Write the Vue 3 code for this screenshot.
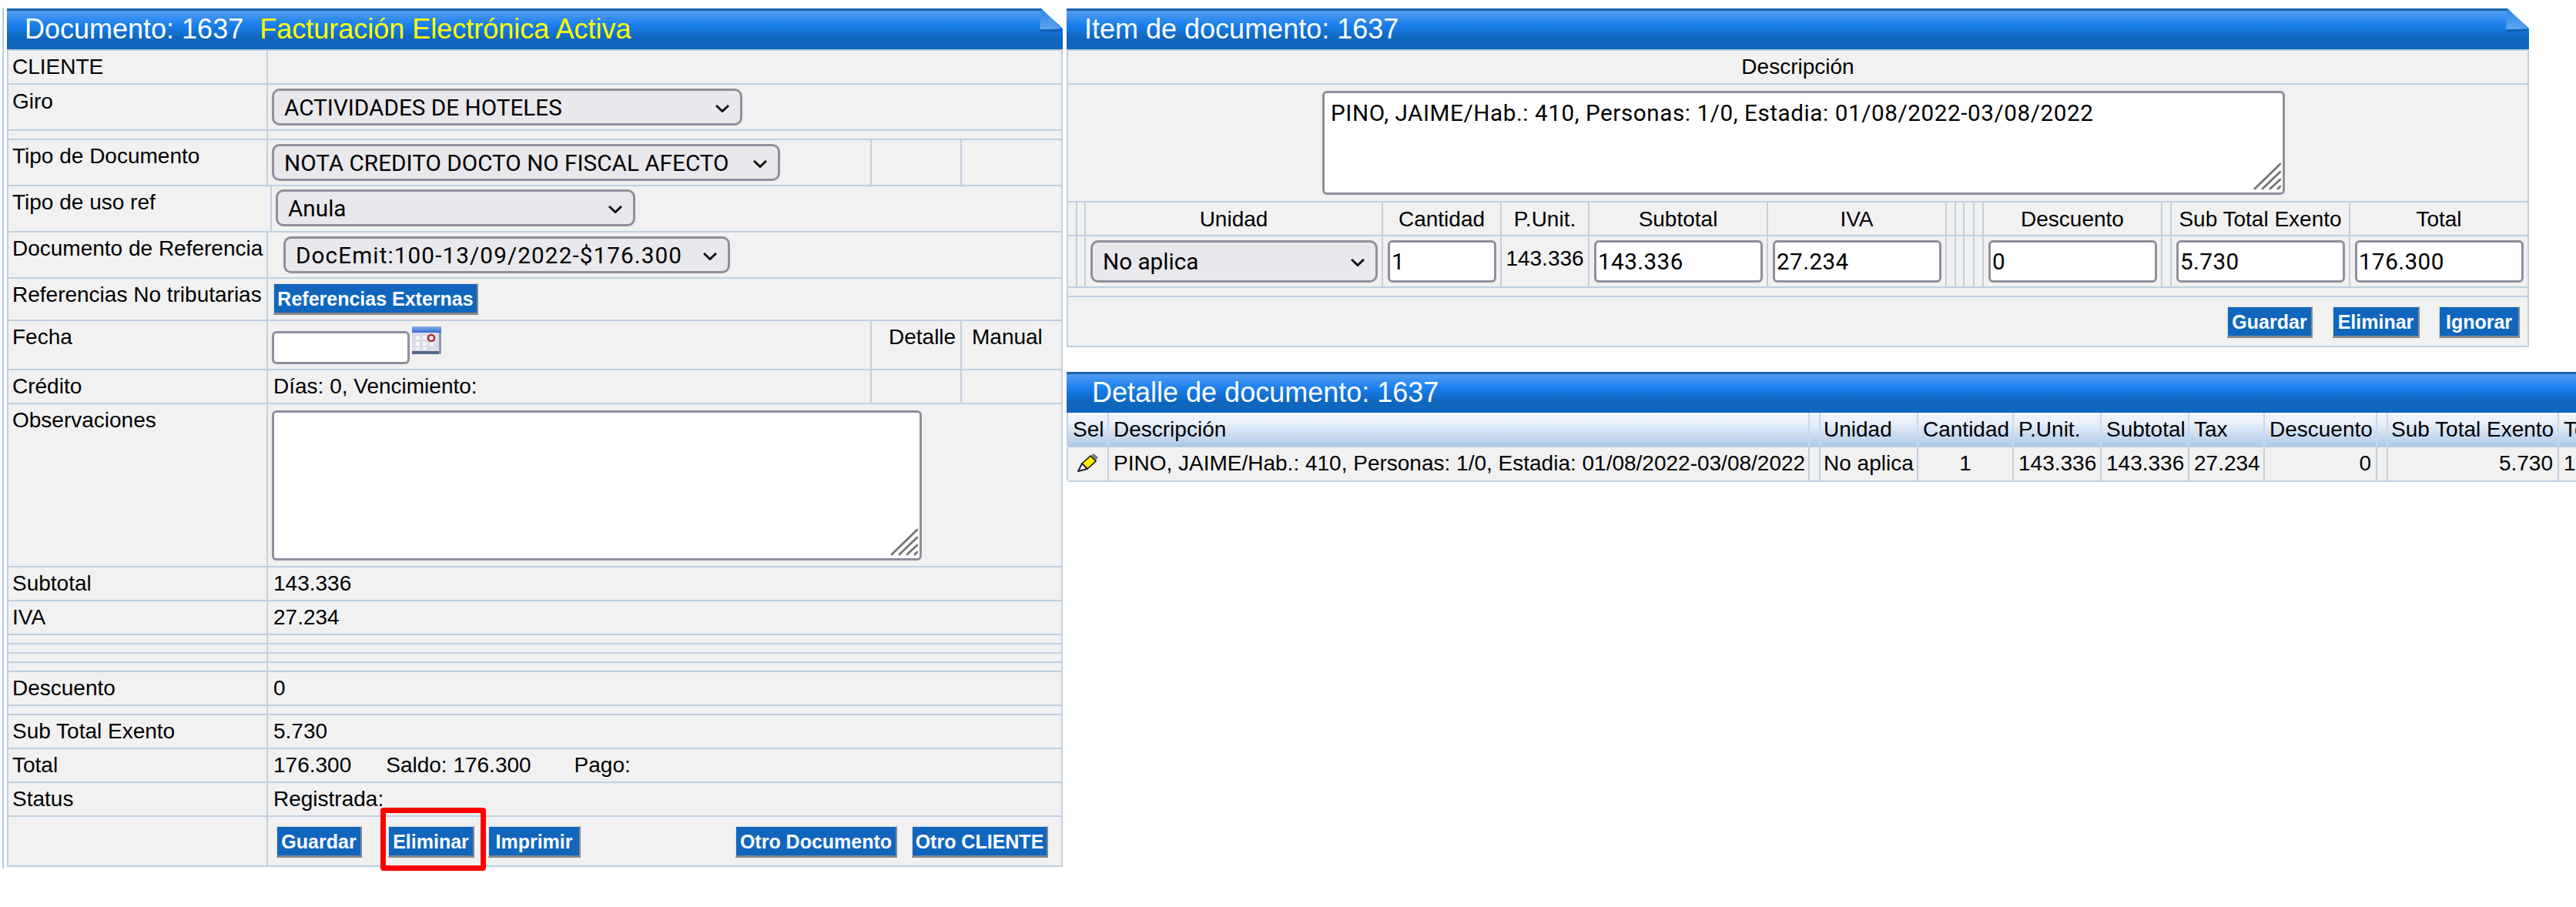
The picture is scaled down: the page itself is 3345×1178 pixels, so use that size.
<script setup>
const itemHeadCols = ['', '', 'Unidad', 'Cantidad', 'P.Unit.', 'Subtotal', 'IVA', '', '', '', '', 'Descuento', '', 'Sub Total Exento', 'Total']
const detailHead = ['Sel', 'Descripción', '', 'Unidad', 'Cantidad', 'P.Unit.', 'Subtotal', 'Tax', 'Descuento', '', 'Sub Total Exento', 'Total']
const blanksA = [1, 2, 3, 4]
</script>

<template>
  <div class="page">
    <div class="left-col">
      <section class="panel doc">
        <header class="head">
          <span class="title">Documento: 1637</span>
          <span class="title active">Facturación Electrónica Activa</span>
          <svg class="fold" width="30" height="34" viewBox="0 0 30 34">
            <polygon points="2,0 30,0 30,26" fill="#fff" />
            <polygon points="2,0 28,26 0,28" fill="url(#foldA)" />
            <rect x="0" y="27" width="28" height="3" fill="#0d57a3" opacity=".7" />
            <defs>
              <linearGradient id="foldA" x1="0" y1="0" x2="0" y2="1">
                <stop offset="0" stop-color="#2d86e8" />
                <stop offset="1" stop-color="#5fa4ee" />
              </linearGradient>
            </defs>
          </svg>
        </header>
        <div class="body">
          <div class="row r44"><div class="lab">CLIENTE</div><div class="val"></div></div>
          <div class="row r60">
            <div class="lab lab-giro">Giro</div>
            <div class="val">
              <div class="sel w-giro"><select><option>ACTIVIDADES DE HOTELES</option></select><svg class="chev" width="18" height="10" viewBox="0 0 18 10"><polyline points="1,1 9,8.5 17,1" /></svg></div>
            </div>
          </div>
          <div class="row r12"><div class="lab"></div><div class="val"></div></div>
          <div class="row r60">
            <div class="lab">Tipo de Documento</div>
            <div class="val">
              <div class="sel w-tipo"><select><option>NOTA CREDITO DOCTO NO FISCAL AFECTO</option></select><svg class="chev" width="18" height="10" viewBox="0 0 18 10"><polyline points="1,1 9,8.5 17,1" /></svg></div>
            </div>
            <div class="c-det"></div><div class="c-man"></div>
          </div>
          <div class="row r60">
            <div class="lab lab-wide">Tipo de uso ref</div>
            <div class="val">
              <div class="sel w-uso"><select><option>Anula</option></select><svg class="chev" width="18" height="10" viewBox="0 0 18 10"><polyline points="1,1 9,8.5 17,1" /></svg></div>
            </div>
          </div>
          <div class="row r60">
            <div class="lab">Documento de Referencia</div>
            <div class="val">
              <div class="sel w-ref"><select><option>DocEmit:100-13/09/2022-$176.300</option></select><svg class="chev" width="18" height="10" viewBox="0 0 18 10"><polyline points="1,1 9,8.5 17,1" /></svg></div>
            </div>
          </div>
          <div class="row r55">
            <div class="lab">Referencias No tributarias</div>
            <div class="val"><button class="btn b-ext">Referencias Externas</button></div>
          </div>
          <div class="row r63">
            <div class="lab">Fecha</div>
            <div class="val fecha">
              <input class="inp in-fecha" type="text" />
              <svg class="cal" width="38" height="36" viewBox="0 0 38 36">
                <defs>
                  <linearGradient id="calTop" x1="0" y1="0" x2="0" y2="1">
                    <stop offset="0" stop-color="#8fb2ec" />
                    <stop offset="1" stop-color="#3468d8" />
                  </linearGradient>
                </defs>
                <rect x="0" y="0" width="38" height="36" rx="1" fill="#d9dce6" />
                <rect x="0" y="0" width="38" height="8" fill="url(#calTop)" />
                <g fill="#f6f7fb">
                  <rect x="5" y="12" width="5" height="5" /><rect x="14" y="12" width="5" height="5" />
                  <rect x="5" y="20" width="5" height="5" /><rect x="14" y="20" width="5" height="5" /><rect x="23" y="20" width="5" height="5" />
                  <rect x="5" y="27" width="5" height="3" /><rect x="14" y="27" width="5" height="3" />
                </g>
                <circle cx="25" cy="15" r="4" fill="#fff" stroke="#ac2f33" stroke-width="2.6" />
                <rect x="0" y="32" width="38" height="4" fill="#53688a" />
                <rect x="35" y="8" width="3" height="28" fill="#8e9ab0" />
              </svg>
            </div>
            <div class="c-det">Detalle</div><div class="c-man">Manual</div>
          </div>
          <div class="row r44">
            <div class="lab">Crédito</div>
            <div class="val txt">Días: 0, Vencimiento:</div>
            <div class="c-det"></div><div class="c-man"></div>
          </div>
          <div class="row r212">
            <div class="lab">Observaciones</div>
            <div class="val">
              <div class="ta ta-obs">
                <textarea></textarea>
                <svg class="grip" width="36" height="36" viewBox="0 0 36 36"><g><line x1="2" y1="34" x2="35" y2="2" /><line x1="12" y1="34" x2="35" y2="12" /><line x1="22" y1="34" x2="35" y2="22" /><line x1="32" y1="34" x2="35" y2="31" /></g></svg>
              </div>
            </div>
          </div>
          <div class="row r44"><div class="lab">Subtotal</div><div class="val txt">143.336</div></div>
          <div class="row r44"><div class="lab">IVA</div><div class="val txt">27.234</div></div>
          <div v-for="b in blanksA" :key="b" class="row r12"><div class="lab"></div><div class="val"></div></div>
          <div class="row r44"><div class="lab">Descuento</div><div class="val txt">0</div></div>
          <div class="row r12"><div class="lab"></div><div class="val"></div></div>
          <div class="row r44"><div class="lab">Sub Total Exento</div><div class="val txt">5.730</div></div>
          <div class="row r44">
            <div class="lab">Total</div>
            <div class="val txt"><span class="t-total">176.300</span><span class="t-saldo">Saldo: 176.300</span><span>Pago:</span></div>
          </div>
          <div class="row r44"><div class="lab">Status</div><div class="val txt">Registrada:</div></div>
          <div class="row r65">
            <div class="lab"></div>
            <div class="val actions">
              <button class="btn b-g">Guardar</button>
              <button class="btn b-e">Eliminar</button>
              <button class="btn b-i">Imprimir</button>
              <button class="btn b-od">Otro Documento</button>
              <button class="btn b-oc">Otro CLIENTE</button>
            </div>
          </div>
        </div>
        <div class="redbox"></div>
      </section>
    </div>

    <div class="right-col">
      <section class="panel item">
        <header class="head">
          <span class="title">Item de documento: 1637</span>
          <svg class="fold" width="30" height="34" viewBox="0 0 30 34">
            <polygon points="2,0 30,0 30,26" fill="#fff" />
            <polygon points="2,0 28,26 0,28" fill="url(#foldB)" />
            <rect x="0" y="27" width="28" height="3" fill="#0d57a3" opacity=".7" />
            <defs>
              <linearGradient id="foldB" x1="0" y1="0" x2="0" y2="1">
                <stop offset="0" stop-color="#2d86e8" />
                <stop offset="1" stop-color="#5fa4ee" />
              </linearGradient>
            </defs>
          </svg>
        </header>
        <div class="body">
          <div class="row r44 center">Descripción</div>
          <div class="row r153 desc-row">
            <div class="ta ta-desc">
              <textarea>PINO, JAIME/Hab.: 410, Personas: 1/0, Estadia: 01/08/2022-03/08/2022</textarea>
              <svg class="grip" width="36" height="36" viewBox="0 0 36 36"><g><line x1="2" y1="34" x2="35" y2="2" /><line x1="12" y1="34" x2="35" y2="12" /><line x1="22" y1="34" x2="35" y2="22" /><line x1="32" y1="34" x2="35" y2="31" /></g></svg>
            </div>
          </div>
          <div class="grid-item r44 gridrow">
            <div v-for="(c, i) in itemHeadCols" :key="i" class="gc head-c">{{ c }}</div>
          </div>
          <div class="grid-item r67 gridrow">
            <div class="gc"></div><div class="gc"></div>
            <div class="gc pad"><div class="sel w-full"><select><option>No aplica</option></select><svg class="chev" width="18" height="10" viewBox="0 0 18 10"><polyline points="1,1 9,8.5 17,1" /></svg></div></div>
            <div class="gc pad"><input class="inp in-cell" value="1" /></div>
            <div class="gc punit">143.336</div>
            <div class="gc pad"><input class="inp in-cell" value="143.336" /></div>
            <div class="gc pad"><input class="inp in-cell" value="27.234" /></div>
            <div class="gc"></div><div class="gc"></div><div class="gc"></div><div class="gc"></div>
            <div class="gc pad"><input class="inp in-cell" value="0" /></div>
            <div class="gc"></div>
            <div class="gc pad"><input class="inp in-cell" value="5.730" /></div>
            <div class="gc pad"><input class="inp in-cell" value="176.300" /></div>
          </div>
          <div class="row r12"></div>
          <div class="row r65 item-actions">
            <button class="btn i-g">Guardar</button>
            <button class="btn i-e">Eliminar</button>
            <button class="btn i-i">Ignorar</button>
          </div>
        </div>
      </section>

      <section class="panel detail">
        <header class="head"><span class="title t-detail">Detalle de documento: 1637</span></header>
        <div class="grid-detail d-head">
          <div v-for="(c, i) in detailHead" :key="i" class="dc">{{ c }}</div>
        </div>
        <div class="grid-detail d-row">
          <div class="dc icon-c">
            <svg width="28" height="25" viewBox="0 0 28 25">
              <polygon points="18,2 21,0 27,5 24,9" fill="#7c7c7c" />
              <polygon points="6,13 17,3 24,10 13,20" fill="#fbf000" stroke="#111" stroke-width="1.6" />
              <polygon points="6,13 1,23 13,20" fill="#fff" stroke="#222" stroke-width="2" stroke-linejoin="round" />
            </svg>
          </div>
          <div class="dc">PINO, JAIME/Hab.: 410, Personas: 1/0, Estadia: 01/08/2022-03/08/2022</div>
          <div class="dc"></div>
          <div class="dc">No aplica</div>
          <div class="dc mid">1</div>
          <div class="dc">143.336</div>
          <div class="dc">143.336</div>
          <div class="dc">27.234</div>
          <div class="dc end">0</div>
          <div class="dc"></div>
          <div class="dc end">5.730</div>
          <div class="dc">176.300</div>
        </div>
      </section>
    </div>
  </div>
</template>

<style>
html, body { margin: 0; background: #fff; overflow: hidden; }
</style>

<style scoped>
.page {
  width: 3345px;
  height: 1178px;
  overflow: hidden;
  display: flex;
  align-items: flex-start;
  box-sizing: border-box;
  padding-left: 3px;
  font-family: "Liberation Sans", Arial, sans-serif;
  font-size: 28px;
  color: #000;
}
.left-col {
  flex: none;
  width: 1377px;
  height: 1118px;
  margin-top: 10px;
  padding: 1px 0 0 4px;
  box-sizing: border-box;
  border-left: 2px solid #b4cbea;
}
.right-col {
  flex: none;
  width: 1960px;
  margin: 11px 0 0 5px;
  overflow: hidden;
}
.panel { position: relative; }
.item { width: 1899px; }
.detail { margin-top: 32px; width: 1960px; overflow: hidden; }
.head {
  position: relative;
  height: 53px;
  box-sizing: border-box;
  display: flex;
  align-items: center;
  padding: 0 0 0 23px;
  white-space: nowrap;
  background: linear-gradient(#1b60aa 0, #1b60aa 2px, #4f9cf2 4px, #1a7fee 40%, #0f66bd 73%, #0f66bd 100%);
}
.title { color: #fff; font-size: 36px; line-height: 40px; }
.active { color: #ffff00; margin-left: 21px; }
.t-detail { margin-left: 10px; }
.fold { position: absolute; right: 0; top: 0; }
.body {
  border: 2px solid #c0cfe0;
  border-bottom: 0;
  background: #f1f1f1;
}
.row {
  display: flex;
  box-sizing: border-box;
  border-bottom: 2px solid #c0cfe0;
  line-height: 32px;
}
.r12 { height: 12px; }
.r44 { height: 44px; }
.r55 { height: 55px; }
.r60 { height: 60px; }
.r63 { height: 64px; }
.r65 { height: 65px; }
.r67 { height: 67px; }
.r153 { height: 153px; }
.r212 { height: 212px; }
.lab {
  flex: none;
  width: 337px;
  box-sizing: border-box;
  padding: 5px 0 0 5px;
  border-right: 2px solid #c0cfe0;
  white-space: nowrap;
  overflow: visible;
}
.lab-giro { padding-top: 6px; }
.lab-wide { width: 342px; }
.val {
  flex: 1;
  min-width: 0;
  box-sizing: border-box;
  padding-left: 5px;
}
.val.txt { padding: 5px 0 0 7px; white-space: nowrap; }
.t-total { margin-right: 45px; }
.t-saldo { margin-right: 56px; }
.c-det, .c-man {
  flex: none;
  box-sizing: border-box;
  border-left: 2px solid #c0cfe0;
  padding-top: 5px;
  white-space: nowrap;
}
.c-det { width: 117px; padding-left: 22px; }
.c-man { width: 131px; padding-left: 13px; }
.fecha { position: relative; display: flex; align-items: flex-start; }
.cal { flex: none; margin: 7px 0 0 3px; }

.sel { position: relative; display: block; height: 48px; margin-top: 5px; }
.sel select {
  appearance: none;
  -webkit-appearance: none;
  width: 100%;
  height: 100%;
  box-sizing: border-box;
  margin: 0;
  border: 3px solid #8f8f9d;
  border-radius: 10px;
  background: #e9e8ec;
  padding: 0 30px 0 13px;
  font-family: Roboto, "Liberation Sans", sans-serif;
  font-size: 29.7px;
  color: #000;
}
.chev { position: absolute; right: 17px; top: 21px; pointer-events: none; }
.chev polyline { fill: none; stroke: #111; stroke-width: 3; }
.w-giro { width: 611px; }
.w-tipo { width: 660px; }
.w-uso { width: 467px; margin-top: 4px; }
.w-ref { width: 580px; margin-left: 15px; }
.w-ref select { letter-spacing: 1.1px; }
.w-full { height: 55px; margin-top: 0; }
.w-full select { padding-left: 13px; }
.w-full .chev { top: 24px; }

.inp {
  box-sizing: border-box;
  margin: 0;
  border: 3px solid #8f8f9d;
  border-radius: 6px;
  background: #fff;
  padding: 0 2px;
  font-family: Roboto, "Liberation Sans", sans-serif;
  font-size: 29.7px;
  letter-spacing: 0.4px;
  color: #000;
  outline: none;
}
.in-fecha { flex: none; width: 179px; height: 43px; margin-top: 13px; }
.in-cell { display: block; width: 100%; height: 55px; }

.ta { position: relative; }
.ta textarea {
  display: block;
  width: 100%;
  height: 100%;
  box-sizing: border-box;
  margin: 0;
  border: 3px solid #8f8f9d;
  border-radius: 6px;
  background: #fff;
  padding: 8px 8px;
  resize: none;
  outline: none;
  font-family: Roboto, "Liberation Sans", sans-serif;
  font-size: 29.7px;
  letter-spacing: 0.55px;
  line-height: 36px;
  color: #000;
}
.ta-obs { width: 844px; height: 195px; margin-top: 8px; }
.ta-desc { width: 1250px; height: 135px; margin: 8px 0 0 330px; }
.grip { position: absolute; right: 5px; bottom: 6px; pointer-events: none; }
.grip line { stroke: #777; stroke-width: 3; stroke-linecap: round; }

.center { justify-content: center; align-items: center; }

.gridrow { box-sizing: border-box; border-bottom: 2px solid #c0cfe0; }
.grid-item {
  display: grid;
  grid-template-columns: 12px 11px 386px 154px 114px 232px 232px 12px 11px 13px 12px 232px 12px 232px 230px;
}
.gc {
  box-sizing: border-box;
  border-right: 2px solid #c0cfe0;
  min-width: 0;
}
.gc:last-child { border-right: 0; }
.head-c { text-align: center; line-height: 32px; padding-top: 6px; white-space: nowrap; }
.pad { padding: 5px 5px 0 6px; }
.punit { text-align: center; padding-top: 13px; line-height: 32px; white-space: nowrap; }

.btn {
  box-sizing: border-box;
  height: 41px;
  margin: 0;
  padding: 0;
  flex: none;
  border: 0;
  border-top: 1px solid #dcdcdc;
  border-left: 1px solid #dcdcdc;
  border-right: 2px solid #888;
  border-bottom: 3px solid #888;
  background: #1066bd;
  color: #fff;
  font-family: "Liberation Sans", Arial, sans-serif;
  font-weight: 700;
  font-size: 25px;
  line-height: 34px;
  white-space: nowrap;
}
.b-ext { display: block; width: 266px; margin-top: 6px; margin-left: 2px; }
.actions { display: flex; align-items: flex-start; padding: 12px 0 0 11px; }
.b-g { width: 111px; }
.b-e { width: 112px; margin-left: 34px; }
.b-i { width: 120px; margin-left: 18px; }
.b-od { width: 210px; margin-left: 201px; }
.b-oc { width: 177px; margin-left: 19px; }
.item-actions { padding-top: 12px; align-items: flex-start; }
.i-g { width: 111px; margin-left: 1505px; }
.i-e { width: 113px; margin-left: 26px; }
.i-i { width: 105px; margin-left: 25px; }

.redbox {
  position: absolute;
  left: 485px;
  top: 1038px;
  width: 137px;
  height: 82px;
  box-sizing: border-box;
  border: 7px solid #ff0000;
  border-radius: 4px;
  pointer-events: none;
}

.grid-detail {
  display: grid;
  grid-template-columns: 53px 910px 12px 129px 124px 114px 114px 98px 146px 12px 224px 150px;
  margin-left: 2px;
}
.d-head {
  height: 45px;
  box-sizing: border-box;
  background: linear-gradient(#f3f7fc 0, #e9f0fa 30%, #adc8e7 100%);
  border-bottom: 1px solid #c0cfe0;
}
.d-row {
  height: 45px;
  box-sizing: border-box;
  background: #f1f1f1;
  border-bottom: 2px solid #c0cfe0;
}
.detail .d-head, .detail .d-row { position: relative; }
.detail .d-head::before, .detail .d-row::before {
  content: "";
  position: absolute;
  left: -2px;
  top: 0;
  bottom: 0;
  width: 2px;
  background: #c0cfe0;
}
.dc {
  box-sizing: border-box;
  border-right: 2px solid #c0cfe0;
  padding: 5px 6px 0 6px;
  line-height: 32px;
  white-space: nowrap;
  min-width: 0;
  overflow: hidden;
}
.d-head .dc { border-right-color: #c9d8ea; padding-top: 6px; }
.icon-c { padding: 8px 0 0 12px; }
.mid { text-align: center; }
.end { text-align: right; }
</style>
